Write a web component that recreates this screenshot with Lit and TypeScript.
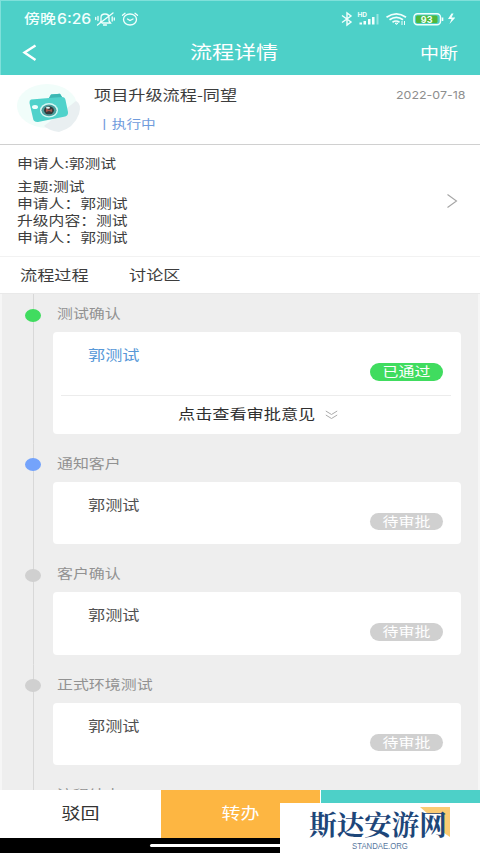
import { LitElement, html, css, svg, nothing } from "lit";
import { customElement, property } from "lit/decorators.js";

interface Step {
  title: string;
  person: string;
  state: "done" | "active" | "waiting";
  opinion?: boolean;
}

const STEPS: Step[] = [
  { title: "测试确认", person: "郭测试", state: "done", opinion: true },
  { title: "通知客户", person: "郭测试", state: "active" },
  { title: "客户确认", person: "郭测试", state: "waiting" },
  { title: "正式环境测试", person: "郭测试", state: "waiting" },
  { title: "流程结束", person: "郭测试", state: "waiting" },
];

/* Extended-width text run */
const wide = css`
  .w { display: inline-block; white-space: nowrap; transform: scaleX(1.225); transform-origin: left center; }
  .w.c { transform-origin: center; }
  .w.r { transform-origin: right center; }
`;

@customElement("status-bar")
class StatusBar extends LitElement {
  static styles = [wide, css`
    :host { display: flex; height: 36px; padding: 0 24px; color: #f2fffd; align-items: center; box-sizing: border-box; }
    .day { font-size: 13px; font-weight: 500; width: 33px; line-height: 18px; margin-top: -2px; }
    .time { font: 500 14px/18px Inter, sans-serif; width: 37px; transform: scaleX(1.12); transform-origin: left; margin-top: -1px; }
    .left { flex: none; margin-left: 1px; }
    .right { margin-left: auto; margin-right: 1px; }
    svg { display: block; }
    .row { display: flex; align-items: center; flex: 1; padding-top: 2px; }
    .num { font: 700 9px Inter, sans-serif; }
    .hd { font: 700 6.5px Inter, sans-serif; }
  `];
  render() {
    return html`<div class="row">
      <span class="day"><span class="w">傍晚</span></span><span class="time">6:26</span>
      <svg class="left" width="46" height="16" viewBox="0 0 46 16" fill="none" stroke="#f2fffd" stroke-width="1.3" stroke-linecap="round">
        <path d="M5 11.500 6 10V6.500Q6 3 10 3t4 3.500V10l1.500 2H7M8.500 14h3M2.500 14 18 2M3 5.500v4M.7 6.500v2M17.200 6v4M19.300 7v2"/>
        <ellipse cx="35" cy="8.500" rx="6.500" ry="5.500"/><path d="M32.500 8l2.500 1.500L38 8M27.500 4.300 30 2.300M42.500 4.300 40 2.300"/>
      </svg>
      <svg class="right" width="114" height="16" viewBox="0 0 114 16" fill="none" stroke="#f2fffd" stroke-width="1.400">
        <path d="M1 4.500 10 11 6 14V2l4 3-9 6.500"/>
        <g fill="#f2fffd" stroke="none">
          ${svg`<text class="hd" x="16.5" y="6">HD</text>`}
          <rect x="18.500" y="11.500" width="2.500" height="2"/><rect x="22.500" y="10" width="2.500" height="3.500"/><rect x="27" y="8" width="2.500" height="5.500"/><rect x="31" y="6" width="2.500" height="7.500"/><rect x="35.500" y="3" width="2" height="10.500" opacity=".45"/>
        </g>
        <path d="M45.500 6.200Q55.500-.5 65 6.200M48.500 8.800q7-4.800 13.500 0M51.500 11.200q3.500-2.400 7 0" stroke-width="1.700"/>
        <path d="M54 12.200h3l-1.500 1.300zM61 10v4M63.500 10v4" stroke-width="1"/>
        <rect x="73" y="2.700" width="26.500" height="11" rx="3.500" stroke-width="1.500"/>
        <rect x="75" y="4.500" width="21.500" height="7.500" rx="1.500" fill="#4fb83c" stroke="none"/>
        <path d="M101.500 6.500v3.500" stroke-width="1.600"/>
        ${svg`<text class="num" x="79.8" y="11.500" fill="#f2fffd" stroke="none">93</text>`}
        <path d="M110.500 2.500 107 8h3.500l-2 5 6-6.500h-4l2-4z" fill="#f2fffd" stroke="none"/>
      </svg>
    </div>`;
  }
}

@customElement("process-summary")
class ProcessSummary extends LitElement {
  static styles = [wide, css`
    :host { display: block; background: #fff; color: #3d3d3d; }
    .top { display: flex; height: 70px; border-bottom: 1px solid #d0d0d0; padding: 0 15px 0 20px; box-sizing: border-box; }
    .pic { width: 74px; flex: none; }
    .pic svg { display: block; margin-left: -5px; }
    .name { font-size: 14px; line-height: 20px; padding-top: 9px; }
    .state { font-size: 12px; line-height: 18px; margin: 11px 0 0 3px; color: #6f9bdc; }
    .date { margin-left: auto; font: 11px/16px Inter, sans-serif; color: #8e8e8e; padding-top: 12px; }
    .date .w { transform: scaleX(1.13); }
    .info { display: flex; justify-content: space-between; align-items: center; padding: 9px 22px 0 17px; height: 112px; box-sizing: border-box; border-bottom: 1px solid #f2f2f2; }
    .lines { align-self: flex-start; font-size: 13px; line-height: 17px; }
    .lines .w { transform: scaleX(1.215); }
    .lines div:first-child { margin-bottom: 6px; }
    .tabs { display: flex; height: 37px; font-size: 14px; line-height: 35px; padding-left: 20px; border-bottom: 1px solid #e9e9e9; box-sizing: border-box; }
    .tabs > div { width: 108.500px; }
    .arrow { margin-bottom: 8px; }
  `];
  render() {
    const lines = ["申请人:郭测试", "主题:测试", "申请人：郭测试", "升级内容：测试", "申请人：郭测试"];
    return html`
      <div class="top">
        <div class="pic"><svg width="70" height="64" viewBox="15 75 70 64">
          <ellipse cx="47" cy="106" rx="30" ry="22" fill="#f1fdfa"/>
          <path d="M44 126 76 101q6 3 3 13-5 14-20 18-9-1-15-6z" fill="#e9eff1"/>
          <path d="M31 99.500 49 98l2-3.500 9-.8 2 3.300q3 0 3.500 3l2.500 12q.5 4-4 4.700L38 122q-4.500.3-5-3.700L29.500 103q-.3-3 1.500-3.500z" fill="#50d2cb"/>
          <path d="M49 98l2-3.500 9-.8 2 3.300z" fill="#3cb7b3"/>
          <ellipse cx="35" cy="107" rx="3" ry="2" fill="#effffd"/>
          <ellipse cx="49" cy="110.300" rx="9" ry="7.300" fill="#d5f7f4"/>
          <ellipse cx="49" cy="110.300" rx="7.500" ry="5.900" fill="#4b9d9c"/>
          <ellipse cx="49" cy="110.300" rx="5" ry="4" fill="#343b3c"/>
          <path d="m46 108 3 2 3-1v3l-3-1-3 1z" fill="#a7544e"/><ellipse cx="48" cy="107.800" rx="2" ry="1" fill="#e4f7f5"/>
        </svg></div>
        <div><div class="name"><span class="w">项目升级流程-同望</span></div><div class="state"><span class="w">丨执行中</span></div></div>
        <div class="date"><span class="w r">2022-07-18</span></div>
      </div>
      <div class="info">
        <div class="lines">${lines.map((l) => html`<div><span class="w">${l}</span></div>`)}</div>
        <svg class="arrow" width="12" height="16" fill="none" stroke="#a5a5a5" stroke-width="1.100"><path d="M1.500 1.500 10.500 8 1.500 14.500"/></svg>
      </div>
      <div class="tabs"><div><span class="w">流程过程</span></div><div><span class="w">讨论区</span></div></div>`;
  }
}

@customElement("process-step")
class ProcessStep extends LitElement {
  @property({ attribute: false }) step!: Step;
  static styles = [wide, css`
    :host { display: grid; grid-template-columns: 53px 1fr; padding-right: 19px; }
    .rail { display: flex; flex-direction: column; align-items: center;
      margin-left: 24px; width: 18px;
      background: linear-gradient(#d8d8d8, #d8d8d8) center / 1px 100% no-repeat; }
    .dot { width: 16px; height: 13px; border-radius: 50%; margin-top: 14.500px; background: #d0d0d0; }
    .done .dot { background: #40dc5f; }
    .active .dot { background: #74a3fb; }
    .title { font-size: 13px; line-height: 18px; color: #929292; padding: 10px 0 10.250px 4px; }
    .card { background: #fff; border-radius: 4px; margin-bottom: 10px; }
    .main { height: 62.250px; display: flex; justify-content: space-between; padding: 0 18px 0 35px; box-sizing: border-box; }
    .person { font-size: 14px; line-height: 20px; padding-top: 12px; color: #505050; }
    .person.done { color: #5798d8; }
    .badge { width: 73.500px; height: 17.500px; border-radius: 9px; background: #d0d0d0; color: #fff; font-size: 13px; line-height: 16px; text-align: center; margin-top: 31px; }
    .badge.done { background: #40dc5f; }
    .more { margin: 0 10px 0 8px; border-top: 1px solid #ececec; height: 39px; display: flex; align-items: center; padding: 0 0 3px 116.500px; font-size: 14px; color: #303030; box-sizing: border-box; }
    .more .w { width: 147px; }
    .more svg { margin-top: 3px; }
  `];
  render() {
    const s = this.step;
    const done = s.state === "done" ? "done" : "";
    return html`
      <div class="rail ${s.state}"><div class="dot"></div></div>
      <div>
        <div class="title"><span class="w">${s.title}</span></div>
        <div class="card">
          <div class="main">
            <div class="person ${done}"><span class="w">${s.person}</span></div>
            <div class="badge ${done}"><span class="w c">${done ? "已通过" : "待审批"}</span></div>
          </div>
          ${s.opinion ? html`<div class="more"><span class="w">点击查看审批意见</span>
            <svg width="13" height="10" fill="none" stroke="#aaa" stroke-width="1"><path d="M.8 1 6.500 4.500 12.200 1M.8 5 6.500 8.500 12.200 5"/></svg></div>` : nothing}
        </div>
      </div>`;
  }
}

@customElement("site-mark")
class SiteMark extends LitElement {
  static styles = css`
    :host { display: block; width: 200px; height: 50px; background: #fff; text-align: center; }
    .name { position: relative; font: 700 27.500px/34px "Noto Serif CJK SC", "Noto Sans CJK SC", serif; color: #1d4679; width: 144px; margin-left: 26px; padding-top: 3px; height: 33px; white-space: nowrap; box-sizing: border-box; }
    .name span { position: relative; }
    svg { position: absolute; left: 114px; top: 4px; }
    .url { font: 9px/10px "Liberation Sans", sans-serif; color: #57779e; transform: scaleX(.86); margin-top: 5px; }
  `;
  render() {
    return html`<div class="name"><svg width="30" height="30" fill="#fbcb74"><path d="M0 0h30v30l-6-4V7H8z"/></svg><span>斯达安游网</span></div><div class="url">STANDAE.ORG</div>`;
  }
}

@customElement("app-root")
class AppRoot extends LitElement {
  static styles = [wide, css`
    :host { display: flex; flex-direction: column; position: relative; width: 480px; height: 853px; overflow: hidden; background: #eee;
      font-family: "Noto Sans CJK SC", sans-serif; }
    header { height: 75px; background: #4dd0c8; flex: none; box-shadow: inset 1px 1px #7fe0da; }
    .bar { display: grid; grid-template-columns: 1fr auto 1fr; align-items: center; padding: 0 26px 0 22px; height: 33px; color: #fff; }
    .title { font-size: 18px; line-height: 24px; margin: -4px 8px 0 0; }
    .stop { font-size: 15.500px; text-align: right; margin: -2px -4px 0 0; line-height: 24px; }
    process-summary { flex: none; }
    .steps { flex: 1; min-height: 0; overflow: hidden; box-shadow: inset 2px 0 #f6f6f6, inset -2px 0 #f6f6f6; }
    footer { flex: none; height: 47.500px; display: grid; grid-template-columns: 160.500px 159.500px 159px; background: #fff; font-size: 15.500px; line-height: 45px; text-align: center; color: #333; }
    .orange { background: #fdb642; color: #fff; }
    .teal { background: #4dd0c8; margin: 0 -1px 0 1px; }
    .home { flex: none; height: 15.500px; background: #000; display: flex; justify-content: center; align-items: center; }
    .pill { width: 180px; height: 3px; background: #fff; border-radius: 2px; }
    site-mark { position: absolute; right: 0; bottom: 0; }
  `];
  render() {
    return html`
      <header>
        <status-bar></status-bar>
        <div class="bar">
          <svg width="16" height="18" fill="none" stroke="#fff" stroke-width="2.400"><path d="M13.500 1.500 2.500 8.500l11 7.500"/></svg>
          <span class="title w c">流程详情</span>
          <span class="stop"><span class="w r">中断</span></span>
        </div>
      </header>
      <process-summary></process-summary>
      <div class="steps">${STEPS.map((s) => html`<process-step .step=${s}></process-step>`)}</div>
      <footer>
        <div><span class="w c">驳回</span></div>
        <div class="orange"><span class="w c">转办</span></div>
        <div class="teal"></div>
      </footer>
      <div class="home"><div class="pill"></div></div>
      <site-mark></site-mark>`;
  }
}
